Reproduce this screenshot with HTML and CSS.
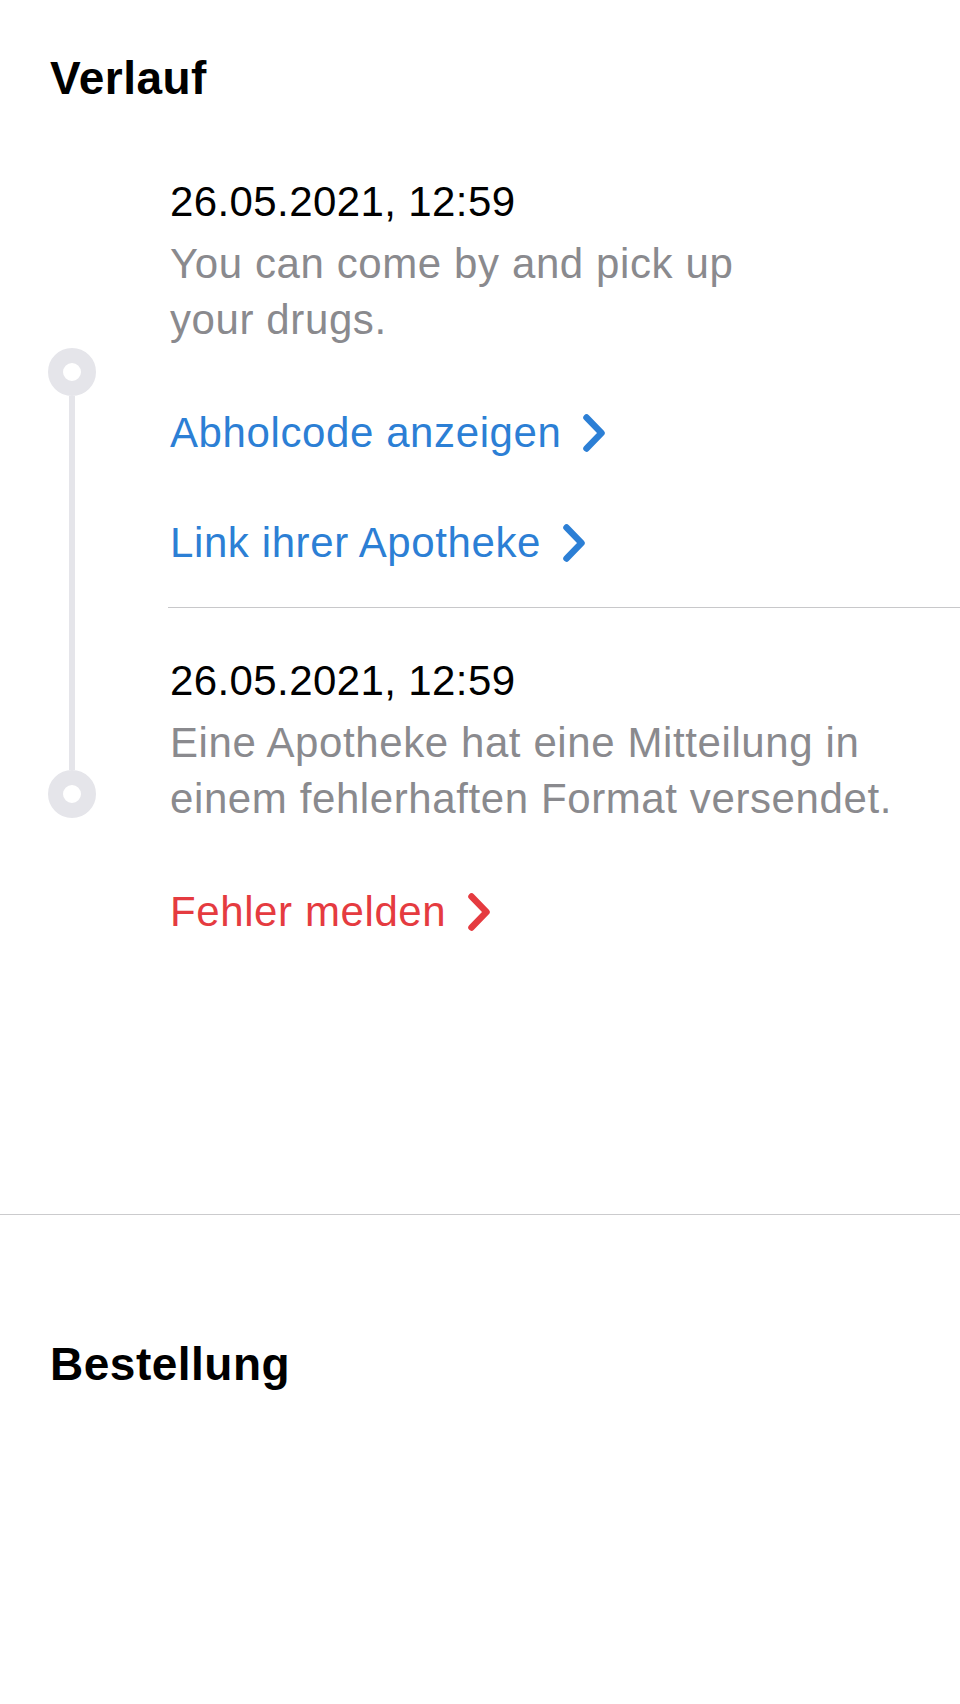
FILE: index.html
```html
<!DOCTYPE html>
<html lang="de">
<head>
<meta charset="utf-8">
<title>Verlauf</title>
<link rel="stylesheet" href="styles.css">
</head>
<body>
<main class="screen">
  <section class="history">
    <h2 class="section-title">Verlauf</h2>
    <div class="timeline">
      <div class="event event-first">
        <div class="marker">
          <span class="track track-empty"></span>
          <span class="dot"></span>
          <span class="track"></span>
        </div>
        <div class="event-body event-body-divided">
          <p class="event-date">26.05.2021, 12:59</p>
          <p class="event-text event-text-narrow">You can come by and pick up your drugs.</p>
          <a class="event-link link-blue">Abholcode anzeigen<svg class="chev" viewBox="0 0 22 38" aria-hidden="true"><path d="M3.5 3.5 L18.5 19 L3.5 34.5"/></svg></a>
          <a class="event-link link-blue">Link ihrer Apotheke<svg class="chev" viewBox="0 0 22 38" aria-hidden="true"><path d="M3.5 3.5 L18.5 19 L3.5 34.5"/></svg></a>
        </div>
      </div>
      <div class="event event-second">
        <div class="marker">
          <span class="track"></span>
          <span class="dot"></span>
          <span class="track track-empty"></span>
        </div>
        <div class="event-body">
          <p class="event-date">26.05.2021, 12:59</p>
          <p class="event-text">Eine Apotheke hat eine Mitteilung in einem fehlerhaften Format versendet.</p>
          <a class="event-link link-red">Fehler melden<svg class="chev" viewBox="0 0 22 38" aria-hidden="true"><path d="M3.5 3.5 L18.5 19 L3.5 34.5"/></svg></a>
        </div>
      </div>
    </div>
  </section>
  <section class="order">
    <h2 class="section-title">Bestellung</h2>
  </section>
</main>
</body>
</html>
```

FILE: styles.css
```css
* { box-sizing: border-box; }

html, body {
  margin: 0;
  padding: 0;
  background: #ffffff;
}

body {
  font-family: "Liberation Sans", Arial, sans-serif;
  color: #000000;
}

.screen {
  width: 960px;
  min-height: 1704px;
}

.history {
  padding-top: 50px;
  padding-bottom: 235px;
  border-bottom: 1.5px solid #cbcbcd;
}

.section-title {
  margin: 0;
  padding-left: 50px;
  font-size: 46px;
  line-height: 56px;
  font-weight: 700;
  letter-spacing: 0.5px;
}

.timeline {
  margin-top: 29px;
  display: flex;
  flex-direction: column;
}

.event {
  display: grid;
  grid-template-columns: 168px 1fr;
}

.marker {
  display: flex;
  flex-direction: column;
  align-items: center;
  width: 144px;
}

.track {
  flex: 1;
  width: 6px;
  background: #e5e5ea;
}

.track-empty {
  background: transparent;
}

.dot {
  width: 48px;
  height: 48px;
  border-radius: 50%;
  border: 15px solid #e5e5ea;
  background: #ffffff;
  flex: none;
}

.event-body {
  padding-right: 20px;
}

.event-first .event-body {
  padding-top: 39px;
  padding-bottom: 36px;
}

.event-second .event-body {
  padding-top: 45px;
  padding-bottom: 39px;
}

.event-body-divided {
  border-bottom: 1.5px solid #c8c8ca;
}

.event-date {
  margin: 0;
  padding-left: 2px;
  font-size: 42px;
  line-height: 56px;
  letter-spacing: 0.4px;
  color: #000000;
}

.event-text {
  margin: 6px 0 0;
  padding-left: 2px;
  font-size: 42px;
  line-height: 56px;
  letter-spacing: 0.6px;
  color: #8a8a8e;
}

.event-text-narrow {
  max-width: 620px;
}

.event-link {
  display: flex;
  align-items: center;
  gap: 22px;
  margin-top: 57px;
  padding-left: 2px;
  font-size: 42px;
  line-height: 56px;
  letter-spacing: 0.6px;
  text-decoration: none;
}

.event-link + .event-link {
  margin-top: 54px;
}

.chev {
  width: 22px;
  height: 38px;
  flex: none;
  fill: none;
  stroke: currentColor;
  stroke-width: 6.5;
  stroke-linecap: round;
  stroke-linejoin: round;
}

.link-blue { color: #2c7fd5; }
.link-red { color: #e53b40; }

.order {
  padding-top: 121px;
}
```
